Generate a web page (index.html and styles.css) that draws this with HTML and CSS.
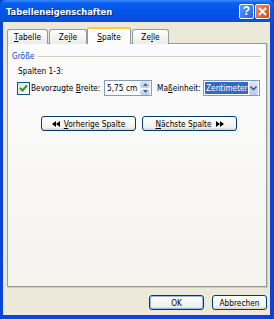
FILE: index.html
```html
<!DOCTYPE html>
<html lang="de">
<head>
  <meta charset="UTF-8" />
  <title>Tabelleneigenschaften</title>
  <link rel="stylesheet" href="styles.css">
</head>
<body>

  <div class="window">
    <div class="titlebar">
      <span class="title">Tabelleneigenschaften</span>
      <div class="tb-buttons">
        <span class="tb-btn help">?</span>
        <span class="tb-btn close">
          <svg width="9" height="9" viewBox="0 0 9 9"><path d="M1 1 L8 8 M8 1 L1 8" stroke="#fff" stroke-width="2"/></svg>
        </span>
      </div>
    </div>

    <div class="client">
      <div class="tabs">
        <div class="tab"><u>T</u>abelle</div>
        <div class="tab">Ze<u>i</u>le</div>
        <div class="tab active"><u>S</u>palte</div>
        <div class="tab">Ze<u>l</u>le</div>
      </div>

      <div class="panel">
        <div class="group-label">
          <span>Größe</span>
          <span class="group-line"></span>
        </div>
        <div class="label-row">Spalten 1-3:</div>

        <div class="field-row">
          <span class="checkbox">
            <svg width="9" height="9" viewBox="0 0 9 9"><path d="M1 4 L3.5 6.5 L8 1.5" stroke="#21a121" stroke-width="2" fill="none"/></svg>
          </span>
          <span class="field-label width-label">Bevorzugte <u>B</u>reite:</span>
          <span class="spin-input">
            <span class="value">5,75 cm</span>
            <span class="spinner">
              <span class="spin-btn"><svg width="5" height="3" viewBox="0 0 5 3"><path d="M0 3 L2.5 0 L5 3Z" fill="#4d6185"/></svg></span>
              <span class="spin-btn"><svg width="5" height="3" viewBox="0 0 5 3"><path d="M0 0 L2.5 3 L5 0Z" fill="#4d6185"/></svg></span>
            </span>
          </span>
          <span class="field-label unit-label">Ma<u>ß</u>einheit:</span>
          <span class="select">
            <span class="selected">Zentimeter</span>
            <span class="drop-btn"><svg width="7" height="5" viewBox="0 0 7 5"><path d="M0.5 0.5 L3.5 3.5 L6.5 0.5" stroke="#4d6185" stroke-width="1.6" fill="none"/></svg></span>
          </span>
        </div>

        <div class="nav-row">
          <button class="btn nav-btn">
            <svg width="8" height="6" viewBox="0 0 8 6"><path d="M0 3 L4 0 L4 6Z M4 3 L8 0 L8 6Z" fill="#000"/></svg>
            <span><u>V</u>orherige Spalte</span>
          </button>
          <button class="btn nav-btn">
            <span><u>N</u>ächste Spalte</span>
            <svg width="8" height="6" viewBox="0 0 8 6"><path d="M0 0 L4 3 L0 6Z M4 0 L8 3 L4 6Z" fill="#000"/></svg>
          </button>
        </div>
      </div>

      <div class="footer">
        <button class="btn dlg-btn default">OK</button>
        <button class="btn dlg-btn">Abbrechen</button>
      </div>
    </div>
  </div>

</body>
</html>
```

FILE: styles.css
```css
* {
  box-sizing: border-box;
}

body {
  margin: 0;
  font-family: 'DejaVu Sans Condensed', 'DejaVu Sans', sans-serif;
  font-size: 8.25px;
  color: #000;
  background: #fff;
  white-space: nowrap;
}

.window {
  width: 274px;
  height: 319px;
  display: flex;
  flex-direction: column;
  background: #0a45d8;
}

.titlebar {
  height: 22px;
  display: flex;
  align-items: center;
  justify-content: space-between;
  padding: 0 4px 0 6px;
  background: linear-gradient(#3d8dfb 0, #0a5ff0 3px, #0254e6 50%, #0a4ed8 100%);
  border-radius: 6px 6px 0 0;
}

.title {
  color: #fff;
  font-weight: bold;
  font-size: 9.3px;
  text-shadow: 1px 1px 0 #0a1e7a;
}

.tb-buttons {
  display: flex;
  gap: 1px;
}

.tb-btn {
  width: 15px;
  height: 15px;
  border: 1px solid #fff;
  border-radius: 2px;
  display: flex;
  align-items: center;
  justify-content: center;
  color: #fff;
  font-family: 'Liberation Sans', sans-serif;
  font-weight: bold;
  font-size: 12px;
}

.help {
  background: linear-gradient(135deg, #5a9cff, #2460e0);
}

.close {
  background: linear-gradient(135deg, #ec8a6a, #d44a1c);
}

.client {
  flex: 1;
  margin: 0 4px 4px 3px;
  background: #ece9d8;
  display: flex;
  flex-direction: column;
  padding: 5px 3px 5px 4px;
}

.tabs {
  display: flex;
  align-items: flex-end;
  height: 17px;
  margin-bottom: -1px;
  position: relative;
  z-index: 1;
}

.tab {
  height: 15px;
  display: flex;
  align-items: center;
  justify-content: center;
  border: 1px solid #919b9c;
  border-bottom: none;
  border-radius: 3px 3px 0 0;
  background: linear-gradient(#fefefe, #ecebe6);
  margin-right: 1px;
}

.tab:nth-child(1) { width: 41px; }
.tab:nth-child(2) { width: 38px; }
.tab:nth-child(4) { width: 37px; }

.tab.active {
  width: 44px;
  height: 17px;
  margin: 0 1px 0 -1px;
  border-top: 2px solid #ffc83c;
  background: #fcfcfe;
}

.panel {
  height: 244px;
  border: 1px solid #919b9c;
  background: linear-gradient(#fcfcfe, #f4f3ee);
  padding: 6px 5px 0 4px;
  box-shadow: 1px 1px 0 #d0cebf;
}

.group-label {
  display: flex;
  align-items: center;
  color: #0046d5;
  height: 12px;
}

.group-line {
  flex: 1;
  height: 1px;
  background: #d0d0bf;
  margin-left: 4px;
}

.label-row {
  margin: 3px 0 0 6px;
  height: 12px;
  line-height: 12px;
}

.field-row {
  display: flex;
  align-items: center;
  margin: 3px 0 0 5px;
  height: 16px;
}

.field-row > * {
  flex-shrink: 0;
}

.checkbox {
  width: 13px;
  height: 13px;
  border: 1px solid #1c5180;
  background: linear-gradient(135deg, #dcdcd7, #fff);
  display: flex;
  align-items: center;
  justify-content: center;
  margin-right: 1px;
}

.width-label {
  width: 73px;
}

.spin-input {
  display: flex;
  width: 48px;
  height: 16px;
  border: 1px solid #7f9db9;
  background: #fff;
  align-items: center;
  padding-left: 2px;
}

.value {
  flex: 1;
}

.spinner {
  display: flex;
  flex-direction: column;
  width: 10px;
  height: 14px;
  gap: 1px;
  margin-right: 1px;
}

.spin-btn {
  flex: 1;
  background: linear-gradient(#dbe6fd, #b9cbf4);
  border-radius: 2px;
  display: flex;
  align-items: center;
  justify-content: center;
}

.unit-label {
  margin-left: 5px;
  width: 46px;
}

.select {
  display: flex;
  align-items: center;
  width: 57px;
  height: 16px;
  border: 1px solid #7f9db9;
  background: #fff;
  padding: 1px;
}

.selected {
  flex: 1;
  background: #316ac5;
  color: #fff;
  height: 12px;
  line-height: 12px;
  padding-left: 1px;
}

.drop-btn {
  width: 12px;
  height: 14px;
  margin-left: 1px;
  background: linear-gradient(#dbe6fd, #b9cbf4);
  border-radius: 2px;
  display: flex;
  align-items: center;
  justify-content: center;
}

.btn {
  font-family: inherit;
  font-size: 8.25px;
  color: #000;
  border: 1px solid #003c74;
  border-radius: 3px;
  background: linear-gradient(#fefefe, #f2f1ec 80%, #d6d0c5);
  padding: 0;
  display: flex;
  align-items: center;
  justify-content: center;
  gap: 4px;
}

.nav-row {
  display: flex;
  gap: 6px;
  margin: 20px 0 0 29px;
}

.nav-btn {
  width: 95px;
  height: 15px;
}

.footer {
  display: flex;
  justify-content: flex-end;
  gap: 8px;
  margin-top: auto;
}

.dlg-btn {
  width: 55px;
  height: 15px;
}

.default {
  box-shadow: inset 0 0 0 1px #9cb8e8;
}
```
